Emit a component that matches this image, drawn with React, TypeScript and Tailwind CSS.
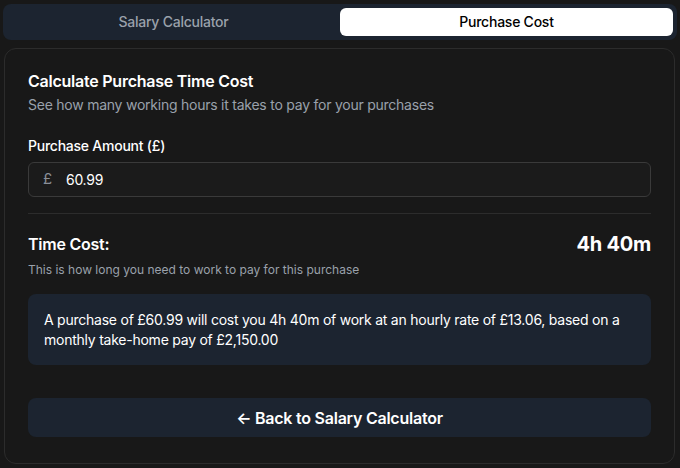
import { useState } from "react";

export default function App() {
  const [tab, setTab] = useState<"salary" | "purchase">("purchase");
  const [amount, setAmount] = useState("60.99");

  return (
    <div className="min-h-[468px] w-full bg-[#181818] px-[3px] pt-[4px] font-['Inter',sans-serif] tracking-[-0.015em] text-white">
      {/* Tabs */}
      <div className="grid h-[36px] grid-cols-2 rounded-lg bg-[#1c2430] p-[4px]">
        <button
          type="button"
          onClick={() => setTab("salary")}
          className={`rounded-md text-sm font-medium ${
            tab === "salary" ? "bg-white text-black" : "text-[#9aa1ab]"
          }`}
        >
          Salary Calculator
        </button>
        <button
          type="button"
          onClick={() => setTab("purchase")}
          className={`rounded-md text-sm font-medium ${
            tab === "purchase" ? "bg-white text-black" : "text-[#9aa1ab]"
          }`}
        >
          Purchase Cost
        </button>
      </div>

      {/* Card */}
      <div className="mx-[1px] mt-[8px] mr-[2px] rounded-xl border border-[#2c2c2c] bg-[#181818] px-[23px] pt-[20px] pb-[26px]">
        <h2 className="text-base font-semibold leading-6">Calculate Purchase Time Cost</h2>
        <p className="mt-[2px] text-sm leading-5 text-[#9aa1ab]">
          See how many working hours it takes to pay for your purchases
        </p>

        <label className="mt-[21px] block text-sm font-medium leading-5">Purchase Amount (£)</label>
        <div className="mt-[6px] flex h-[35px] items-center rounded-md border border-[#3a3a3a] bg-[#1b1b1b] px-[14px]">
          <span className="text-[15px] text-[#8a8f98]">£</span>
          <input
            value={amount}
            onChange={(e) => setAmount(e.target.value)}
            className="ml-[14px] w-full bg-transparent text-sm text-white outline-none"
          />
        </div>

        <div className="mt-[16px] h-px bg-[#2c2c2c]" />

        <div className="mt-[16px] flex items-center justify-between">
          <span className="text-base font-semibold leading-6">Time Cost:</span>
          <span className="text-xl font-bold leading-7">4h 40m</span>
        </div>
        <p className="mt-[4px] text-xs leading-4 tracking-normal text-[#9aa1ab]">
          This is how long you need to work to pay for this purchase
        </p>

        <div className="mt-[16px] rounded-lg bg-[#1c2430] px-[16px] pt-[16px] pb-[15px] text-sm leading-5">
          A purchase of £60.99 will cost you 4h 40m of work at an hourly rate of £13.06, based on a
          monthly take-home pay of £2,150.00
        </div>

        <button
          type="button"
          onClick={() => setTab("salary")}
          className="mt-[33px] flex h-[39px] w-full items-center justify-center rounded-lg bg-[#1c2430] text-base font-semibold"
        >
          ← Back to Salary Calculator
        </button>
      </div>
    </div>
  );
}
